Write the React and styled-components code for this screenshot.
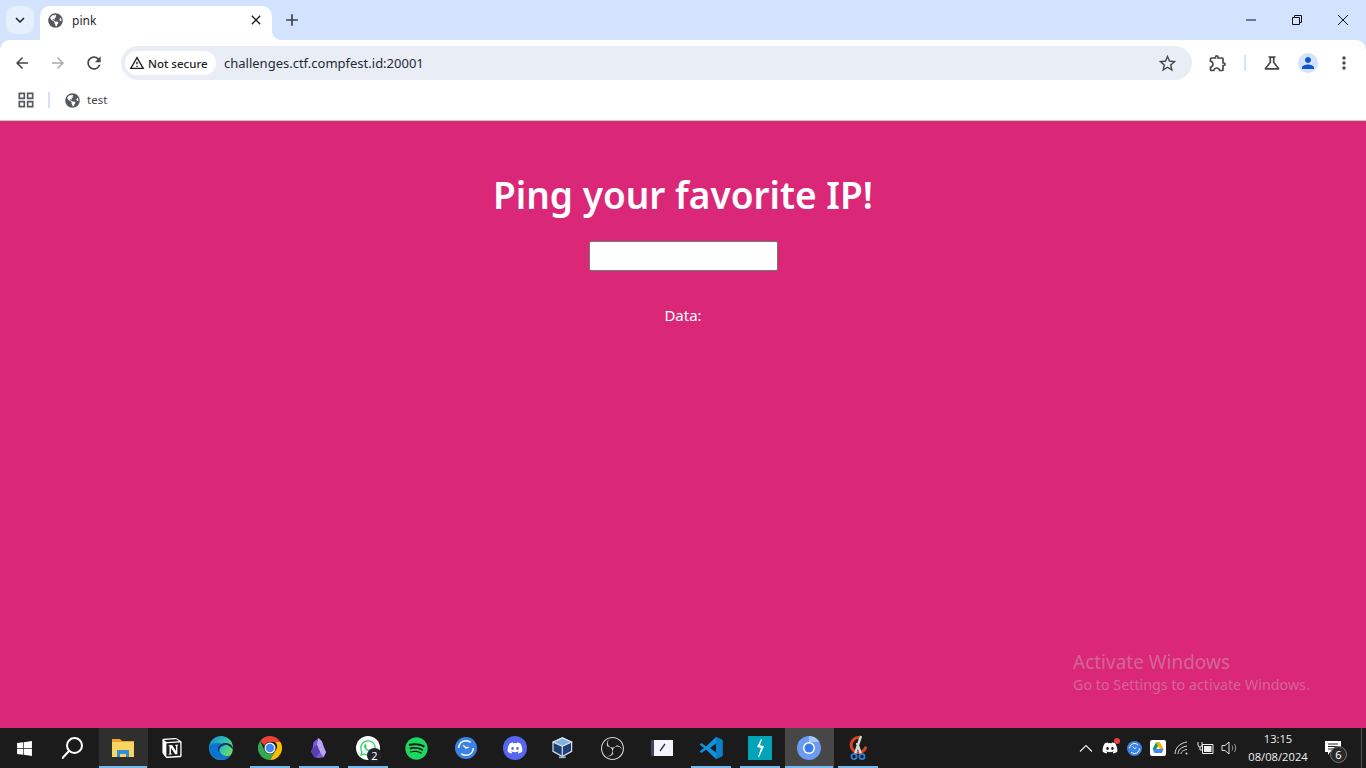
import React from "react"
import styled, { createGlobalStyle } from "styled-components"
import {
  MdAdd, MdArrowBack, MdArrowForward, MdClose, MdExpandMore, MdMoreVert, MdOutlineExtension,
  MdOutlineGridView, MdOutlineScience, MdOutlineWarningAmber, MdPerson, MdRefresh,
  MdStarBorder,
} from "react-icons/md"
import { FaDiscord, FaGlobeAmericas, FaSpotify, FaWhatsapp, FaWindows } from "react-icons/fa"
import { SiNotion, SiObsstudio } from "react-icons/si"

const GlobalStyle = createGlobalStyle`
  html, body, #root { margin: 0; height: 100%; }
  body { overflow: hidden; font-family: "Noto Sans", "Open Sans", sans-serif; }
`

const Page = styled.div`
  display: flex;
  flex-direction: column;
  height: 768px;
  background: #d3e3fd;
`

/* tab strip */
const TabStrip = styled.div`
  display: flex;
  align-items: flex-end;
  height: 40px;
  background: #d3e3fd;
`
const TabSearch = styled.div`
  display: flex;
  align-items: center;
  justify-content: center;
  width: 28px;
  height: 28px;
  margin: 0 6px 6px;
  border-radius: 9px;
  background: #e6effc;
  color: #1f1f1f;
`
const Tab = styled.div`
  position: relative;
  display: flex;
  align-items: center;
  box-sizing: border-box;
  width: 232px;
  height: 34px;
  padding: 0 8px 6px;
  border-radius: 10px 10px 0 0;
  background: #fff;
  color: #56585b;

  &::after {
    content: "";
    position: absolute;
    right: -10px;
    bottom: 0;
    width: 10px;
    height: 10px;
    background: radial-gradient(circle at 100% 0, transparent 10px, #fff 10.5px);
  }
`
const TabTitle = styled.span`
  flex: 1;
  margin-left: 9px;
  font-size: 12px;
  color: #1f1f1f;
`
const NewTab = styled.div`
  display: flex;
  align-items: center;
  justify-content: center;
  width: 28px;
  height: 28px;
  margin: 0 0 6px 6px;
  color: #3c4043;
`
const WindowControls = styled.div`
  display: flex;
  margin-left: auto;
  align-self: stretch;
`
const WindowButton = styled.div`
  display: flex;
  align-items: center;
  justify-content: center;
  width: 46px;
  color: #111;
`

/* toolbar */
const Toolbar = styled.div`
  display: flex;
  align-items: center;
  height: 40px;
  padding: 0 4px;
  border-radius: 10px 10px 0 0;
  background: #fff;
`
const ToolButton = styled.div`
  display: flex;
  align-items: center;
  justify-content: center;
  flex: none;
  width: 36px;
  height: 32px;
  margin-top: 6px;
  color: ${p => p.$muted ? "#a9abad" : "#474747"};
`
const Omnibox = styled.div`
  display: flex;
  align-items: center;
  flex: none;
  box-sizing: border-box;
  width: 1071px;
  height: 34px;
  margin: 6px 8px 0 9px;
  padding: 0 14px 0 4px;
  border-radius: 17px;
  background: #e9eef6;
`
const SecurityChip = styled.div`
  display: flex;
  align-items: center;
  gap: 3px;
  box-sizing: border-box;
  width: 91px;
  height: 24px;
  padding-left: 4px;
  border-radius: 12px;
  background: #fff;
  color: #1f1f1f;
  font-size: 11.5px;
  font-weight: 500;
`
const Url = styled.span`
  flex: 1;
  margin-left: 8px;
  font-size: 13px;
  color: #1f2937;
`
const Divider = styled.div`
  flex: none;
  width: 2px;
  height: 16px;
  background: #d3e3fd;
`
const ToolDivider = styled(Divider)`
  margin: 6px 8px 0;
`
const Avatar = styled.div`
  display: flex;
  align-items: center;
  justify-content: center;
  width: 20px;
  height: 20px;
  border-radius: 50%;
  background: #d3e3fd;
  color: #0b57d0;
  overflow: hidden;
`

/* bookmarks */
const BookmarksBar = styled.div`
  display: flex;
  align-items: center;
  box-sizing: border-box;
  height: 41px;
  padding: 0 0 0 16px;
  border-bottom: 1px solid #c8c8c8;
  background: #fff;
  color: #56585b;
`
const BookmarkDivider = styled(Divider)`
  margin: 0 15px 0 12px;
`
const BookmarkLabel = styled.span`
  margin: 0 0 2px 7px;
  font-size: 11.5px;
  color: #444;
`

/* page content */
const Content = styled.main`
  position: relative;
  flex: 1;
  display: flex;
  flex-direction: column;
  align-items: center;
  background: #db2777;
  color: #fff;
  overflow: hidden;
`
const Title = styled.h1`
  margin: 47px 0 0;
  font-size: 37px;
  line-height: 54px;
  font-weight: 600;
`
const PingInput = styled.input`
  box-sizing: border-box;
  width: 189px;
  height: 30px;
  margin-top: 19px;
  border: 1px solid #767676;
  border-radius: 2px;
  background: #fff;
`
const DataLabel = styled.p`
  margin: 33px 0 0;
  font-size: 15px;
  line-height: 22px;
`
const Watermark = styled.div`
  position: absolute;
  left: 1073px;
  top: 528px;
  color: rgba(200, 200, 200, 0.4);
  white-space: nowrap;
`
const WatermarkTitle = styled.div`
  font-size: 19px;
  line-height: 26px;
`
const WatermarkText = styled.div`
  font-size: 14.3px;
  line-height: 19px;
`

/* taskbar */
const Taskbar = styled.footer`
  display: flex;
  height: 40px;
  padding-left: 1px;
  background: #1b1b1b;
  color: #fff;
`
const TaskItem = styled.div`
  position: relative;
  display: flex;
  align-items: center;
  justify-content: center;
  flex: none;
  box-sizing: border-box;
  width: 49px;
  height: 40px;
  padding-right: 2px;
  background: ${p => p.$active ? "#474747" : p.$open ? "#2f2f2f" : "transparent"};

  &::after {
    content: "";
    display: ${p => p.$running ? "block" : "none"};
    position: absolute;
    bottom: 0;
    left: ${p => p.$active || p.$open ? 0 : "4px"};
    right: ${p => p.$active || p.$open ? "1px" : "5px"};
    height: 2px;
    background: #76b9ed;
  }
`
const RoundIcon = styled.div`
  display: flex;
  align-items: center;
  justify-content: center;
  width: 24px;
  height: 24px;
  border-radius: 50%;
  background: ${p => p.$bg};
  color: ${p => p.$color || "#fff"};
`
const CountBadge = styled.span`
  position: absolute;
  right: 11px;
  bottom: 5px;
  display: flex;
  align-items: center;
  justify-content: center;
  width: 15px;
  height: 15px;
  border-radius: 50%;
  background: #22222c;
  color: #fff;
  font-size: 11px;
`
const Tray = styled.div`
  display: flex;
  align-items: center;
  margin-left: auto;
  height: 100%;
`
const TrayIcon = styled.div`
  position: relative;
  display: flex;
  align-items: center;
  justify-content: center;
  width: 24px;
  color: #e6e6e6;
`
const TrayDot = styled.span`
  position: absolute;
  top: -2px;
  right: 2px;
  width: 6px;
  height: 6px;
  border-radius: 50%;
  background: #e8413c;
`
const Clock = styled.div`
  display: flex;
  flex-direction: column;
  align-items: center;
  width: 70px;
  margin-left: 1px;
  font-family: "Open Sans", sans-serif;
  font-size: 11.2px;
  line-height: 18px;
  color: #f0f0f0;
`
const Notification = styled.div`
  position: relative;
  display: flex;
  align-items: center;
  justify-content: center;
  width: 40px;
  height: 40px;
`
const NotificationCount = styled.span`
  position: absolute;
  right: 6px;
  bottom: 5px;
  display: flex;
  align-items: center;
  justify-content: center;
  box-sizing: border-box;
  width: 17px;
  height: 17px;
  border: 1px solid #777;
  border-radius: 50%;
  background: #2a2a2a;
  font-size: 11px;
`
const ShowDesktop = styled.div`
  width: 4px;
  height: 100%;
  border-left: 1px solid #555;
  margin-left: 8px;
`

const SearchIcon = () => (
  <svg width="24" height="24" viewBox="1.5 0 24 24" fill="none" stroke="#fff" strokeWidth="2">
    <circle cx="14" cy="9.5" r="7.5" />
    <path d="M8.5 15 2 22" strokeLinecap="round" />
  </svg>
)
const FolderIcon = () => (
  <svg width="24" height="24" viewBox="0 0 24 24">
    <path d="M1 3h8l2 2h12v4H1z" fill="#e8a72c" />
    <path d="M1 6h22v15H1z" fill="#fcd462" />
    <path d="M6 21v-7h12v7h-3v-3H9v3z" fill="#2f8fd6" />
  </svg>
)
const EdgeIcon = () => (
  <svg width="24" height="24" viewBox="0 0 24 24">
    <defs>
      <linearGradient id="edgeTop" x1="0" y1="0" x2="1" y2=".6">
        <stop offset="0" stopColor="#0f8ad6" />
        <stop offset=".6" stopColor="#2fc4b0" />
        <stop offset="1" stopColor="#6ddc64" />
      </linearGradient>
    </defs>
    <circle cx="12" cy="12" r="12" fill="url(#edgeTop)" />
    <path d="M0 11c0 8 6 13 13 13 4 0 7-2 9-5-4 2-10 1-11-4-1-3 2-5 5-5C12 6 3 6 0 11z" fill="#0c74cc" />
    <path d="M10 16c-1-5 4-8 8-7 3 1 5 3 6 5 0-1 0-2-.3-3C21 5 11 6 9 12c-.4 2 0 3 1 4z" fill="#0d2d52" />
  </svg>
)
const ChromeIcon = () => (
  <svg width="24" height="24" viewBox="0 0 24 24">
    <path d="M12 0a12 12 0 0 1 10.4 6H12a6 6 0 0 0-5.6 3.6L2.2 5A12 12 0 0 1 12 0z" fill="#ea4335" />
    <path d="M22.4 6A12 12 0 0 1 12 24l5.2-9a6 6 0 0 0-.2-9z" fill="#fbbc04" />
    <path d="M2.2 5a12 12 0 0 0 9.8 19l5.2-9a6 6 0 0 1-10.4 0z" fill="#34a853" />
    <circle cx="12" cy="12" r="5.5" fill="#fff" />
    <circle cx="12" cy="12" r="4.3" fill="#4285f4" />
  </svg>
)
const ObsidianIcon = () => (
  <svg width="15" height="22" viewBox="0 0 18 24">
    <path d="M9 0 3 5 2 12l-2 4 4 7 5 1 6-1 3-6-3-7-2-6z" fill="#7c5cd6" />
    <path d="M9 0 7 8l4 9 4 6 3-6-3-7-2-6z" fill="#b9a4f5" />
    <path d="M2 12l5-4 4 9-5 6-2 0-4-7z" fill="#5a3fb0" />
  </svg>
)
const SyncIcon = ({ size = 22 }) => (
  <svg width={size} height={size} viewBox="0 0 24 24">
    <circle cx="12" cy="12" r="12" fill="#3b82e6" />
    <circle cx="12" cy="12" r="8" fill="none" stroke="#fff" strokeWidth="1.6" strokeDasharray="18 7" />
    <path d="M9 9l3 3 3-1" fill="none" stroke="#fff" strokeWidth="1.6" />
  </svg>
)
const VirtualBoxIcon = () => (
  <svg width="24" height="22" viewBox="0 0 28 26">
    <path d="M12 1 23 6v11l-11 6L1 17V6z" fill="#1d3f72" stroke="#d9e2ee" strokeWidth="1.4" />
    <path d="M12 11 23 6 12 1 1 6z" fill="#7fb2de" stroke="#d9e2ee" strokeWidth="1.4" />
    <path d="M12 11v12" stroke="#d9e2ee" strokeWidth="1.4" />
    <path d="M8 23h8v2H8z" fill="#aab4c0" />
  </svg>
)
const NotepadIcon = () => (
  <svg width="22" height="18" viewBox="0 0 22 18">
    <path d="M0 1h3v16H0z" fill="#3d4660" />
    <path d="M3 1h19v16H3z" fill="#f4f5fb" />
    <path d="M9 12l5-7" stroke="#2d3a5c" strokeWidth="1.4" />
  </svg>
)
const VsCodeIcon = () => (
  <svg width="24" height="24" viewBox="0 0 24 24">
    <path d="M17 1 23.5 4v16L17 23 7 13.5 2.5 17 .5 15.5 5 12 .5 8.5 2.5 7 7 10.5z" fill="#0f94e0" />
    <path d="M17 1 23.5 4v16L17 23V16.5L11 12l6-4.5z" fill="#0a7fca" />
    <path d="M17 7.5 11 12l6 4.5z" fill="#1b1b1b" />
  </svg>
)
const BoltIcon = () => (
  <svg width="24" height="24" viewBox="0 0 24 24">
    <path d="M0 0h24v24H0z" fill="#00a3b8" />
    <path d="M13 3 9 11l4 1-3 9 1 .3 5-11-4-1 2-6z" fill="#fff" />
  </svg>
)
const ChromiumIcon = () => (
  <svg width="24" height="24" viewBox="0 0 24 24">
    <circle cx="12" cy="12" r="12" fill="#6a9cf0" />
    <path d="M12 0a12 12 0 0 1 10.4 6H12z" fill="#a8c7f8" />
    <circle cx="12" cy="12" r="6" fill="#fff" />
    <circle cx="12" cy="12" r="4.5" fill="#3a7bea" />
  </svg>
)
const SnipIcon = () => (
  <svg width="18" height="26" viewBox="0 0 18 26">
    <path d="M10 2.500a7.500 7.500 0 1 0 7 9" fill="none" stroke="#d9431f" strokeWidth="3" />
    <path d="M6 19 12 1M12 19 8 8" stroke="#d8d8d8" strokeWidth="2.4" />
    <circle cx="5" cy="21.5" r="2.6" fill="none" stroke="#2b7fd6" strokeWidth="1.8" />
    <circle cx="13" cy="21.5" r="2.6" fill="none" stroke="#2b7fd6" strokeWidth="1.8" />
  </svg>
)
const DriveIcon = () => (
  <svg width="16" height="16" viewBox="0 0 16 16">
    <rect width="16" height="16" rx="2" fill="#fff" />
    <path d="M6 2.5h4L6.400 9H2.600z" fill="#0f9d58" />
    <path d="M6 2.500h4l3.600 6.500H9.700z" fill="#f4b400" />
    <path d="M2.600 9 4.500 13h7.200l1.900-4z" fill="#4285f4" />
  </svg>
)
const TrayChevron = () => (
  <svg width="14" height="8" viewBox="0 0 14 8" fill="none" stroke="#eee" strokeWidth="1.1">
    <path d="M1 7.500 7 1.500l6 6" />
  </svg>
)
const WifiIcon = () => (
  <svg width="16" height="14" viewBox="0 0 16 14" fill="none" stroke="#ddd" strokeWidth="1">
    <path d="M1 13C1 7 6 2 13 1" />
    <path d="M4 13c0-4 3-7 9-8" />
    <path d="M7 13c0-2 2-4 6-4.500" />
    <circle cx="12.500" cy="12.500" r="1" fill="#ddd" stroke="none" />
  </svg>
)
const BatteryIcon = () => (
  <svg width="18" height="14" viewBox="0 0 18 14" fill="none" stroke="#eee">
    <path d="M5.500 3.500h10.500v9H5.500z" />
    <path d="M7 5h7.500v6H7z" fill="#eee" stroke="none" />
    <path d="M1 1v3a2 2 0 0 0 4 0V1M3 6v3h2" />
  </svg>
)
const VolumeIcon = () => (
  <svg width="18" height="14" viewBox="0 0 18 14" fill="none" stroke="#ddd">
    <path d="M1 4.500h3L8 1v12L4 9.500H1z" />
    <path d="M11 4.500c1 1.500 1 3.500 0 5M13.500 3c1.500 2.500 1.500 5.500 0 8" stroke="#999" />
  </svg>
)
const MessageIcon = () => (
  <svg width="16" height="14" viewBox="0 0 16 14">
    <path d="M0 0h16v11H5l-2 3v-3H0z" fill="#fff" />
    <path d="M3 3h10M3 5.500h10M3 8h6" stroke="#222" />
  </svg>
)

const taskItems = [
  { id: "start", icon: <FaWindows size={17} color="#fff" /> },
  { id: "search", icon: <SearchIcon /> },
  { id: "files", icon: <FolderIcon />, running: true, open: true },
  { id: "notion", icon: <SiNotion size={20} color="#fff" /> },
  { id: "edge", icon: <EdgeIcon /> },
  { id: "chrome", icon: <ChromeIcon />, running: true },
  { id: "obsidian", icon: <ObsidianIcon />, running: true },
  {
    id: "whatsapp",
    icon: <RoundIcon $bg="#fff" $color="#25d366"><FaWhatsapp size={18} /></RoundIcon>,
    running: true,
    badge: 2,
  },
  { id: "spotify", icon: <FaSpotify size={23} color="#1ed760" /> },
  { id: "sync", icon: <SyncIcon /> },
  { id: "discord", icon: <RoundIcon $bg="#5865f2"><FaDiscord size={16} /></RoundIcon> },
  { id: "vbox", icon: <VirtualBoxIcon /> },
  { id: "obs", icon: <SiObsstudio size={23} color="#d4d4d4" /> },
  { id: "notepad", icon: <NotepadIcon /> },
  { id: "vscode", icon: <VsCodeIcon />, running: true },
  { id: "bolt", icon: <BoltIcon />, running: true },
  { id: "chromium", icon: <ChromiumIcon />, running: true, active: true },
  { id: "snip", icon: <SnipIcon />, running: true },
]

const App = () => (
  <Page>
    <GlobalStyle />
    <TabStrip>
      <TabSearch><MdExpandMore size={18} /></TabSearch>
      <Tab>
        <FaGlobeAmericas size={15} />
        <TabTitle>pink</TabTitle>
        <MdClose size={16} color="#1f1f1f" />
      </Tab>
      <NewTab><MdAdd size={20} /></NewTab>
      <WindowControls>
        <WindowButton>
          <svg width="10" height="10" viewBox="0 0 10 10"><path d="M0 5h10" stroke="#111" /></svg>
        </WindowButton>
        <WindowButton>
          <svg width="10" height="10" viewBox="0 0 10 10" fill="none" stroke="#111">
            <path d="M.5 2.500h7v7h-7zM2.500 2.500v-2h7v7h-2" />
          </svg>
        </WindowButton>
        <WindowButton>
          <svg width="10" height="10" viewBox="0 0 10 10"><path d="M0 0l10 10M10 0 0 10" stroke="#111" /></svg>
        </WindowButton>
      </WindowControls>
    </TabStrip>

    <Toolbar>
      <ToolButton><MdArrowBack size={18} /></ToolButton>
      <ToolButton $muted><MdArrowForward size={18} /></ToolButton>
      <ToolButton><MdRefresh size={20} /></ToolButton>
      <Omnibox>
        <SecurityChip><MdOutlineWarningAmber size={16} />Not secure</SecurityChip>
        <Url>challenges.ctf.compfest.id:20001</Url>
        <MdStarBorder size={21} color="#474747" />
      </Omnibox>
      <ToolButton><MdOutlineExtension size={20} /></ToolButton>
      <ToolDivider />
      <ToolButton><MdOutlineScience size={20} /></ToolButton>
      <ToolButton><Avatar><MdPerson size={18} /></Avatar></ToolButton>
      <ToolButton><MdMoreVert size={20} /></ToolButton>
    </Toolbar>

    <BookmarksBar>
      <MdOutlineGridView size={20} />
      <BookmarkDivider />
      <FaGlobeAmericas size={15} />
      <BookmarkLabel>test</BookmarkLabel>
    </BookmarksBar>

    <Content>
      <Title>Ping your favorite IP!</Title>
      <PingInput />
      <DataLabel>Data:</DataLabel>
      <Watermark>
        <WatermarkTitle>Activate Windows</WatermarkTitle>
        <WatermarkText>Go to Settings to activate Windows.</WatermarkText>
      </Watermark>
    </Content>

    <Taskbar>
      {taskItems.map(item => (
        <TaskItem key={item.id} $running={item.running} $active={item.active} $open={item.open}>
          {item.icon}
          {item.badge && <CountBadge>{item.badge}</CountBadge>}
        </TaskItem>
      ))}
      <Tray>
        <TrayIcon><TrayChevron /></TrayIcon>
        <TrayIcon><FaDiscord size={16} color="#fff" /><TrayDot /></TrayIcon>
        <TrayIcon><SyncIcon size={15} /></TrayIcon>
        <TrayIcon><DriveIcon /></TrayIcon>
        <TrayIcon><WifiIcon /></TrayIcon>
        <TrayIcon><BatteryIcon /></TrayIcon>
        <TrayIcon><VolumeIcon /></TrayIcon>
        <Clock>
          <span>13:15</span>
          <span>08/08/2024</span>
        </Clock>
        <Notification>
          <MessageIcon />
          <NotificationCount>6</NotificationCount>
        </Notification>
        <ShowDesktop />
      </Tray>
    </Taskbar>
  </Page>
)

export default App
